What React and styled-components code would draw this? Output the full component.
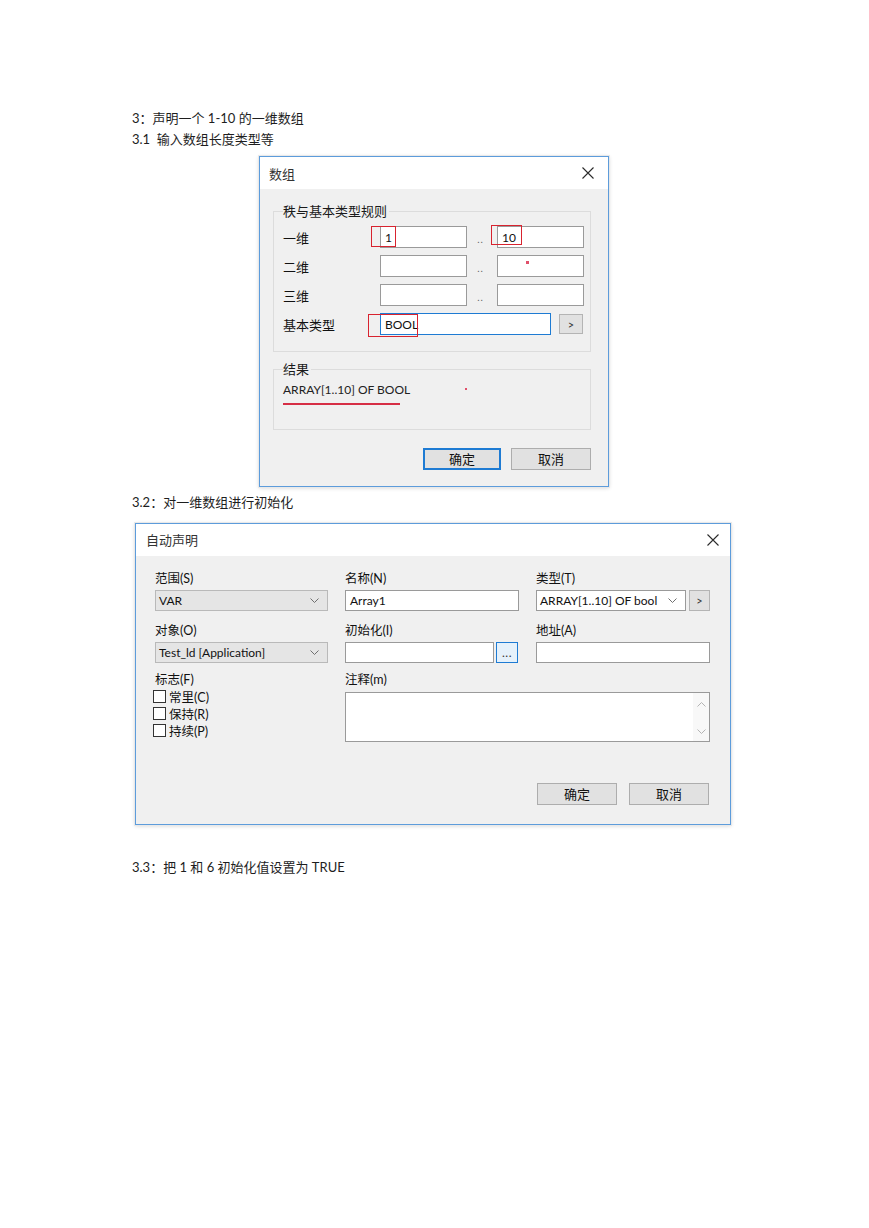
import styled, { createGlobalStyle } from 'styled-components';

const GlobalStyle = createGlobalStyle`
  html, body {
    margin: 0;
    padding: 0;
    background: #ffffff;
  }
  body {
    font-family: Lato, "Noto Sans CJK SC", sans-serif;
    color: #1a1a1a;
  }
`

const dimRows = [
  { label: '一维', from: '1', to: '10' },
  { label: '二维', from: '', to: '' },
  { label: '三维', from: '', to: '' },
]

function CloseIcon(){
  return(
    <svg width="12" height="12" viewBox="0 0 12 12">
      <path d="M0.5 0.5 L11.5 11.5 M11.5 0.5 L0.5 11.5" stroke="#2b2b2b" strokeWidth="1.1" fill="none"/>
    </svg>
  )
}

function Chevron({up, color = '#6f6f6f'}){
  return(
    <svg width="9" height="5" viewBox="0 0 9 5">
      <polyline points={up ? '0.5,4.5 4.5,0.5 8.5,4.5' : '0.5,0.5 4.5,4.5 8.5,0.5'} stroke={color} strokeWidth="1" fill="none"/>
    </svg>
  )
}

export default function App(){
  return(
    <Page>
      <GlobalStyle/>
      <Caption>3：声明一个 1-10 的一维数组</Caption>
      <Caption>3.1&nbsp;&nbsp;输入数组长度类型等</Caption>

      {/* Array dialog */}
      <Dialog $indent={127} $top={6} $width={350}>
        <TitleBar $padLeft={9} $padRight={14}>
          <TitleText>数组</TitleText>
          <CloseIcon/>
        </TitleBar>
        <ArrayBody>
          <GroupBox $pad="7px 6px 16px 9px">
            <GroupLegend>秩与基本类型规则</GroupLegend>
            <DimGrid>
              {dimRows.map((row, i) => (
                <DimRow key={row.label}>
                  <DimLabel>{row.label}</DimLabel>
                  <FieldCell>
                    <TextBox $w={87}>{row.from}</TextBox>
                    {i === 0 && <Mark $left={-9} $top={0} $w={25} $h={21}/>}
                  </FieldCell>
                  <RangeSep>..</RangeSep>
                  <FieldCell>
                    <TextBox $w={87}>{row.to}</TextBox>
                    {i === 0 && <Mark $left={-6} $top={-1} $w={31} $h={20}/>}
                    {i === 1 && <Dot $left={29} $top={6}/>}
                  </FieldCell>
                </DimRow>
              ))}
              <DimRow>
                <DimLabel>基本类型</DimLabel>
                <TypeCell>
                  <FieldCell>
                    <TextBox $w={171} $focused>BOOL</TextBox>
                    <Mark $left={-12} $top={1} $w={50} $h={23}/>
                  </FieldCell>
                  <ArrowButton $w={24} $h={20}>&gt;</ArrowButton>
                </TypeCell>
              </DimRow>
            </DimGrid>
          </GroupBox>

          <GroupBox $pad="5px 6px 24px 9px" $gap={9}>
            <GroupLegend>结果</GroupLegend>
            <ResultLine>
              ARRAY[1..10] OF BOOL
              <Dot $left={182} $top={6} $size={2}/>
            </ResultLine>
            <Underline/>
          </GroupBox>

          <ButtonRow $top={18} $gap={10}>
            <PushButton $w={78} $default>确定</PushButton>
            <PushButton $w={80}>取消</PushButton>
          </ButtonRow>
        </ArrayBody>
      </Dialog>

      <Caption $top={5}>3.2：对一维数组进行初始化</Caption>

      {/* Auto declare dialog */}
      <Dialog $indent={3} $top={10} $width={596}>
        <TitleBar $padLeft={10} $padRight={11}>
          <TitleText>自动声明</TitleText>
          <CloseIcon/>
        </TitleBar>
        <DeclareBody>
          <DeclareGrid>
            <Field>
              <FieldLabel>范围(S)</FieldLabel>
              <Combo $w={173} $grey>
                <ComboText>VAR</ComboText>
                <Chevron/>
              </Combo>
            </Field>
            <Field>
              <FieldLabel>名称(N)</FieldLabel>
              <TextBox $w={174} $h={21}>Array1</TextBox>
            </Field>
            <Field>
              <FieldLabel>类型(T)</FieldLabel>
              <Inline $gap={3}>
                <Combo $w={150}>
                  <ComboText>ARRAY[1..10] OF bool</ComboText>
                  <Chevron/>
                </Combo>
                <ArrowButton $w={21} $h={21}>&gt;</ArrowButton>
              </Inline>
            </Field>

            <Field>
              <FieldLabel>对象(O)</FieldLabel>
              <Combo $w={173} $grey>
                <ComboText>Test_ld [Application]</ComboText>
                <Chevron/>
              </Combo>
            </Field>
            <Field>
              <FieldLabel>初始化(I)</FieldLabel>
              <Inline $gap={2}>
                <TextBox $w={149} $h={21}/>
                <DotsButton>...</DotsButton>
              </Inline>
            </Field>
            <Field>
              <FieldLabel>地址(A)</FieldLabel>
              <TextBox $w={174} $h={21}/>
            </Field>

            <Field>
              <FieldLabel>标志(F)</FieldLabel>
              <CheckList>
                <CheckRow><CheckBox/>常里(C)</CheckRow>
                <CheckRow><CheckBox/>保持(R)</CheckRow>
                <CheckRow><CheckBox/>持续(P)</CheckRow>
              </CheckList>
            </Field>
            <Field $span={2}>
              <FieldLabel>注释(m)</FieldLabel>
              <MemoBox>
                <MemoText/>
                <ScrollCol>
                  <Chevron up color="#b4b4b4"/>
                  <Chevron color="#b4b4b4"/>
                </ScrollCol>
              </MemoBox>
            </Field>
          </DeclareGrid>

          <ButtonRow $top={41} $gap={12} $right={1}>
            <PushButton $w={80}>确定</PushButton>
            <PushButton $w={80}>取消</PushButton>
          </ButtonRow>
        </DeclareBody>
      </Dialog>

      <Caption $top={32}>3.3：把 1 和 6 初始化值设置为 TRUE</Caption>
    </Page>
  )
}

const Page = styled.div`
  display: flex;
  flex-direction: column;
  align-items: flex-start;
  width: 869px;
  min-height: 1228px;
  box-sizing: border-box;
  padding: 108px 0 0 132px;
  background: #ffffff;
`
const Caption = styled.div`
  margin-top: ${(props) => props.$top || 0}px;
  font-family: Lato, "Noto Sans CJK SC", sans-serif;
  font-size: 13px;
  line-height: 21px;
  color: #1e1e1e;
  white-space: pre;
`
const Dialog = styled.div`
  display: flex;
  flex-direction: column;
  width: ${(props) => props.$width}px;
  margin-top: ${(props) => props.$top}px;
  margin-left: ${(props) => props.$indent}px;
  box-sizing: border-box;
  border: 1px solid #5d9cdb;
  background: #f0f0f0;
  box-shadow: 0 0 0 1px #e9e9e9, 0 1px 4px rgba(0, 0, 0, 0.18);
  font-family: Lato, "Noto Sans CJK SC", sans-serif;
  font-size: 12px;
  color: #111;
`
const TitleBar = styled.div`
  display: flex;
  align-items: center;
  justify-content: space-between;
  height: 32px;
  padding: 0 ${(props) => props.$padRight}px 0 ${(props) => props.$padLeft}px;
  background: #ffffff;
`
const TitleText = styled.span`
  font-size: 13px;
  color: #333;
`
const ArrayBody = styled.div`
  display: flex;
  flex-direction: column;
  padding: 14px 17px 16px 13px;
`
const GroupBox = styled.fieldset`
  margin: ${(props) => props.$gap || 0}px 0 0 0;
  padding: ${(props) => props.$pad};
  border: 1px solid #dcdcdc;
  border-radius: 0;
  min-width: 0;
`
const GroupLegend = styled.legend`
  padding: 0 2px 0 0;
  font-size: 13px;
  line-height: 16px;
  color: #1a1a1a;
`
const DimGrid = styled.div`
  display: flex;
  flex-direction: column;
  gap: 7px;
`
const DimRow = styled.div`
  display: grid;
  grid-template-columns: 97px 87px 30px 87px;
  align-items: center;
  height: 22px;
`
const DimLabel = styled.span`
  font-size: 13px;
  color: #111;
`
const FieldCell = styled.div`
  position: relative;
  display: flex;
`
const TypeCell = styled.div`
  grid-column: span 3;
  display: flex;
  align-items: center;
  gap: 8px;
`
const TextBox = styled.div`
  display: flex;
  align-items: center;
  width: ${(props) => props.$w}px;
  height: ${(props) => props.$h || 22}px;
  box-sizing: border-box;
  padding: 0 4px;
  background: #ffffff;
  border: 1px solid ${(props) => (props.$focused ? '#1e7bd3' : '#9a9a9a')};
  font-size: 12px;
  color: #111;
  white-space: nowrap;
  overflow: hidden;
`
const RangeSep = styled.span`
  text-align: center;
  font-size: 10px;
  letter-spacing: 1px;
  color: #666;
  padding: 4px 3px 0 0;
`
const Mark = styled.span`
  position: absolute;
  left: ${(props) => props.$left}px;
  top: ${(props) => props.$top}px;
  width: ${(props) => props.$w}px;
  height: ${(props) => props.$h}px;
  box-sizing: border-box;
  border: 1px solid #d8232f;
  pointer-events: none;
`
const Dot = styled.span`
  position: absolute;
  left: ${(props) => props.$left}px;
  top: ${(props) => props.$top}px;
  width: ${(props) => props.$size || 3}px;
  height: ${(props) => props.$size || 3}px;
  background: #e0506a;
`
const ArrowButton = styled.div`
  display: flex;
  align-items: center;
  justify-content: center;
  width: ${(props) => props.$w}px;
  height: ${(props) => props.$h}px;
  box-sizing: border-box;
  background: #e1e1e1;
  border: 1px solid #b4b4b4;
  font-size: 11px;
  color: #333;
`
const ResultLine = styled.div`
  position: relative;
  font-size: 12px;
  line-height: 16px;
  color: #222;
`
const Underline = styled.div`
  width: 117px;
  height: 1.5px;
  margin-top: 5px;
  background: #d62e45;
`
const ButtonRow = styled.div`
  display: flex;
  justify-content: flex-end;
  gap: ${(props) => props.$gap}px;
  margin-top: ${(props) => props.$top}px;
  padding-right: ${(props) => props.$right || 0}px;
`
const PushButton = styled.div`
  display: flex;
  align-items: center;
  justify-content: center;
  width: ${(props) => props.$w}px;
  height: 22px;
  box-sizing: border-box;
  background: #e1e1e1;
  border: ${(props) => (props.$default ? '2px solid #1e7bd3' : '1px solid #adadad')};
  font-size: 13px;
  color: #111;
`
const DeclareBody = styled.div`
  display: flex;
  flex-direction: column;
  padding: 15px 20px 19px 19px;
`
const DeclareGrid = styled.div`
  display: grid;
  grid-template-columns: 173px 174px 174px;
  column-gap: 17px;
  row-gap: 12px;
  & > :nth-child(n + 7) {
    margin-top: -3px;
  }
`
const Field = styled.div`
  display: flex;
  flex-direction: column;
  gap: 3px;
  grid-column: span ${(props) => props.$span || 1};
`
const FieldLabel = styled.span`
  font-size: 12.5px;
  line-height: 16px;
  color: #111;
`
const Combo = styled.div`
  display: flex;
  align-items: center;
  justify-content: space-between;
  width: ${(props) => props.$w}px;
  height: 21px;
  box-sizing: border-box;
  padding: 0 8px 0 3px;
  background: ${(props) => (props.$grey ? '#e5e5e5' : '#ffffff')};
  border: 1px solid ${(props) => (props.$grey ? '#b9b9b9' : '#9a9a9a')};
`
const ComboText = styled.span`
  font-size: 12px;
  color: #111;
  white-space: nowrap;
`
const Inline = styled.div`
  display: flex;
  align-items: center;
  gap: ${(props) => props.$gap}px;
`
const DotsButton = styled.div`
  display: flex;
  align-items: flex-end;
  justify-content: center;
  width: 22px;
  height: 21px;
  box-sizing: border-box;
  padding-bottom: 3px;
  background: #e5f1fb;
  border: 1px solid #1e7bd3;
  font-size: 12px;
  line-height: 12px;
  letter-spacing: 0.5px;
  color: #333;
`
const CheckList = styled.div`
  display: flex;
  flex-direction: column;
  margin-top: -3px;
  margin-left: -2px;
`
const CheckRow = styled.div`
  display: flex;
  align-items: center;
  gap: 3px;
  height: 17px;
  font-size: 12.5px;
  color: #111;
`
const CheckBox = styled.span`
  width: 13px;
  height: 13px;
  box-sizing: border-box;
  background: #ffffff;
  border: 1px solid #333;
`
const MemoBox = styled.div`
  display: flex;
  height: 50px;
  box-sizing: border-box;
  margin-top: 1px;
  background: #ffffff;
  border: 1px solid #9a9a9a;
`
const MemoText = styled.div`
  flex: 1;
`
const ScrollCol = styled.div`
  display: flex;
  flex-direction: column;
  align-items: center;
  justify-content: space-between;
  width: 16px;
  padding: 9px 0 7px;
  background: #f8f8f8;
`
